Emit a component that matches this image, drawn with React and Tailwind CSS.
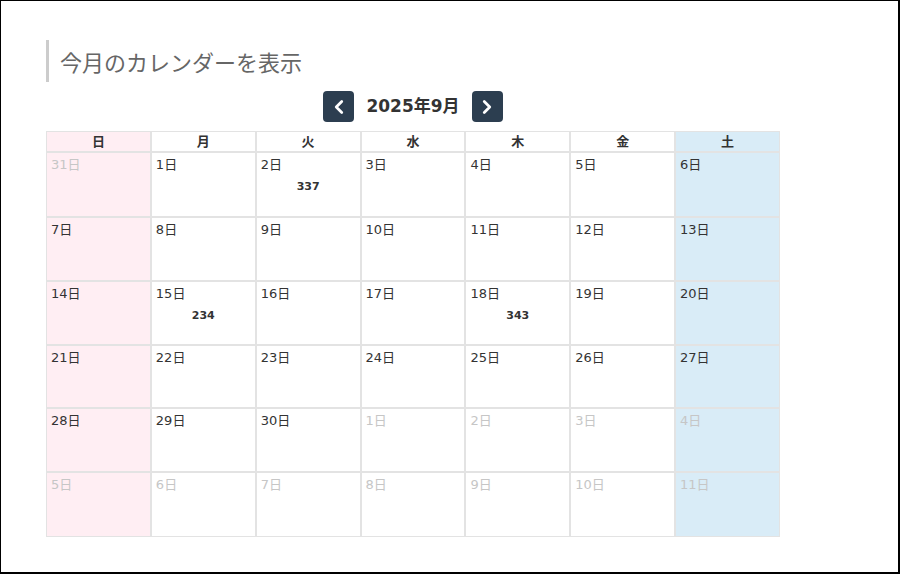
import { ChevronLeft, ChevronRight } from 'lucide-react'

const days = ['日', '月', '火', '水', '木', '金', '土']

const weeks = [
  [[31, 0], [1, 1], [2, 1, '337'], [3, 1], [4, 1], [5, 1], [6, 1]],
  [[7, 1], [8, 1], [9, 1], [10, 1], [11, 1], [12, 1], [13, 1]],
  [[14, 1], [15, 1, '234'], [16, 1], [17, 1], [18, 1, '343'], [19, 1], [20, 1]],
  [[21, 1], [22, 1], [23, 1], [24, 1], [25, 1], [26, 1], [27, 1]],
  [[28, 1], [29, 1], [30, 1], [1, 0], [2, 0], [3, 0], [4, 0]],
  [[5, 0], [6, 0], [7, 0], [8, 0], [9, 0], [10, 0], [11, 0]],
]

const rowH = ['h-[65px]', 'h-[64px]', 'h-[64px]', 'h-[63px]', 'h-[64px]', 'h-[65px]']

const bg = (i) => (i === 0 ? 'bg-[#ffeef3]' : i === 6 ? 'bg-[#d9ecf7]' : 'bg-white')

export default function App() {
  return (
    <div
      className="w-[900px] h-[574px] bg-white border-l border-t border-r-2 border-b-2 border-black pl-[45px] pt-[39px] text-[#333]"
      style={{ fontFamily: '"DejaVu Sans", "Noto Sans CJK JP", sans-serif' }}
    >
      <h2
        className="border-l-[3px] border-[#cccccc] pl-[11px] h-[42px] flex items-center text-[22px] text-[#666] font-normal"
        style={{ fontFamily: '"Noto Sans CJK JP", sans-serif' }}
      >
        今月のカレンダーを表示
      </h2>

      <div className="w-[734px] flex items-center justify-center gap-[12px] mt-[9px] mb-[9px]">
        <button className="w-[31px] h-[31px] rounded-[4px] bg-[#2c3e50] text-white flex items-center justify-center">
          <ChevronLeft size={22} strokeWidth={3} />
        </button>
        <span className="text-[17px] font-bold text-[#333]">2025年9月</span>
        <button className="w-[31px] h-[31px] rounded-[4px] bg-[#2c3e50] text-white flex items-center justify-center">
          <ChevronRight size={22} strokeWidth={3} />
        </button>
      </div>

      <table className="w-[734px] table-fixed border-separate border-spacing-0 text-[13px]">
        <thead>
          <tr>
            {days.map((d, i) => (
              <th key={d} className={`h-[21px] border border-[#e3e3e3] font-bold text-[13px] text-[#333] leading-none ${bg(i)}`}>
                {d}
              </th>
            ))}
          </tr>
        </thead>
        <tbody>
          {weeks.map((w, r) => (
            <tr key={r}>
              {w.map(([n, cur, count], i) => (
                <td key={i} className={`${rowH[r]} align-top border border-[#e3e3e3] px-[4px] pt-[4px] ${bg(i)}`}>
                  <div className={`leading-[16px] ${cur ? 'text-[#333]' : 'text-[#c6c6c6]'}`}>{n}日</div>
                  {count && <div className="text-center text-[11px] font-bold mt-[7px] leading-[14px]">{count}</div>}
                </td>
              ))}
            </tr>
          ))}
        </tbody>
      </table>
    </div>
  )
}
